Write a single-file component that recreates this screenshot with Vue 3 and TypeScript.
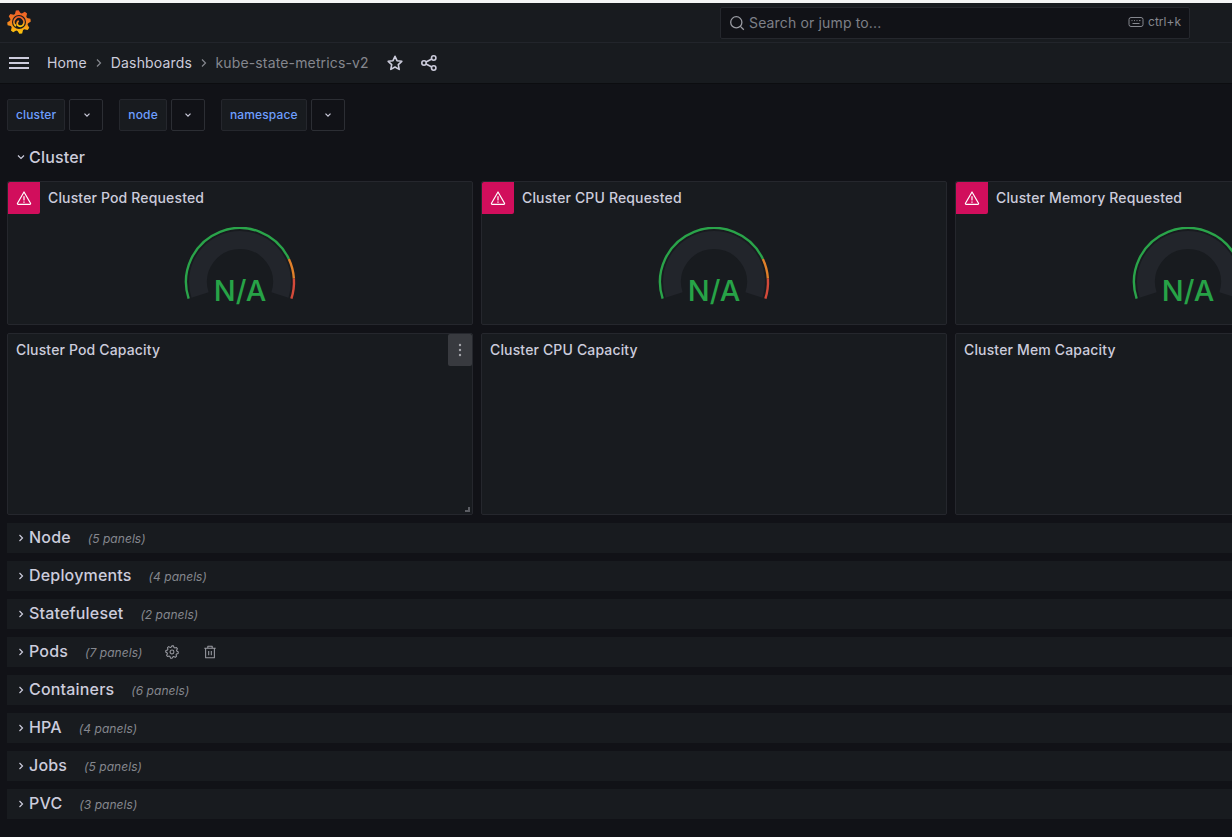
<script setup lang="ts">
interface Row { name: string; count: number; tools?: boolean }

const rows: Row[] = [
  { name: 'Node', count: 5 },
  { name: 'Deployments', count: 4 },
  { name: 'Statefuleset', count: 2 },
  { name: 'Pods', count: 7, tools: true },
  { name: 'Containers', count: 6 },
  { name: 'HPA', count: 4 },
  { name: 'Jobs', count: 5 },
  { name: 'PVC', count: 3 },
]
const filters = ['cluster', 'node', 'namespace']
const gauges = ['Cluster Pod Requested', 'Cluster CPU Requested', 'Cluster Memory Requested']
const stats = ['Cluster Pod Capacity', 'Cluster CPU Capacity', 'Cluster Mem Capacity']

const CX = 56
const CY = 55
function pt(r: number, frac: number): [number, number] {
  const a = ((198 - 216 * frac) * Math.PI) / 180
  return [CX + r * Math.cos(a), CY - r * Math.sin(a)]
}
function arc(r: number, from: number, to: number): string {
  const [x1, y1] = pt(r, from)
  const [x2, y2] = pt(r, to)
  const large = (to - from) * 216 > 180 ? 1 : 0
  return `M${x1.toFixed(2)} ${y1.toFixed(2)}A${r} ${r} 0 ${large} 1 ${x2.toFixed(2)} ${y2.toFixed(2)}`
}
const band = arc(42, 0, 1)
const greenArc = arc(54, 0, 0.8)
const orangeArc = arc(54, 0.8, 0.9)
const redArc = arc(54, 0.9, 1)

function gearPath(c: number, inner: number, outer: number, teeth: number, offset: number): string {
  const pts: string[] = []
  const step = (Math.PI * 2) / teeth
  for (let i = 0; i < teeth; i++) {
    const base = i * step + offset
    const seq: [number, number][] = [[0, inner], [0.25, outer], [0.55, outer], [0.8, inner]]
    for (const [f, r] of seq) {
      const a = base + f * step
      pts.push(`${(c + r * Math.cos(a)).toFixed(2)} ${(c + r * Math.sin(a)).toFixed(2)}`)
    }
  }
  return 'M' + pts.join('L') + 'Z'
}
const logoGear = gearPath(12, 9, 11.8, 8, 0.32)
const settingsGear = gearPath(8, 5.6, 7.2, 8, -0.2)
</script>

<template>
  <div class="page">
    <header class="top-bar">
      <svg class="logo" viewBox="0 0 24 24" width="24" height="24" aria-hidden="true">
        <defs>
          <linearGradient id="grafana-grad" x1="0.5" y1="1" x2="0.5" y2="0">
            <stop offset="0" stop-color="#fbca0a" />
            <stop offset="0.45" stop-color="#f5871f" />
            <stop offset="1" stop-color="#ef5a28" />
          </linearGradient>
        </defs>
        <path :d="logoGear" fill="url(#grafana-grad)" />
        <circle cx="12" cy="12" r="7" fill="#181b1f" />
        <path d="M8.400 15.500a5 5 0 1 1 7.300-.2c-1.300 1.200-3.700 1.300-4.800.1a2.800 2.800 0 0 1 .3-4.100" fill="none" stroke="url(#grafana-grad)" stroke-width="1.800" stroke-linecap="round" />
      </svg>
      <div class="search">
        <svg class="search-icon" viewBox="0 0 16 16" width="16" height="16" aria-hidden="true">
          <circle cx="7.300" cy="7.300" r="5.600" />
          <path d="M11.400 11.400l3.400 3.400" />
        </svg>
        <span class="search-text">Search or jump to...</span>
        <span class="shortcut">
          <svg viewBox="0 0 16 12" width="16" height="12" aria-hidden="true">
            <rect x="1" y="1.500" width="14" height="9" rx="2" />
            <path d="M3.500 4.600h1M6 4.600h1M8.500 4.600h1M11 4.600h1.500M4.500 7.500h7" />
          </svg>
          ctrl+k
        </span>
      </div>
    </header>

    <nav class="nav-bar">
      <svg class="menu" viewBox="0 0 20 14" width="20" height="14" aria-hidden="true">
        <path d="M0 2h20M0 7h20M0 12h20" />
      </svg>
      <span class="crumb">Home</span>
      <svg class="sep" viewBox="0 0 8 10" width="8" height="10" aria-hidden="true"><path d="M2 1.500L5.500 5 2 8.500" /></svg>
      <span class="crumb">Dashboards</span>
      <svg class="sep last" viewBox="0 0 8 10" width="8" height="10" aria-hidden="true"><path d="M2 1.500L5.500 5 2 8.500" /></svg>
      <span class="crumb current">kube-state-metrics-v2</span>
      <svg class="nav-icon star" viewBox="0 0 16 16" width="16" height="16" aria-hidden="true">
        <path d="M8 1.300l2 4.400 4.800.6-3.500 3.300.9 4.800L8 12l-4.200 2.400.9-4.800L1.200 6.300 6 5.700z" />
      </svg>
      <svg class="nav-icon share" viewBox="0 0 16 16" width="16" height="16" aria-hidden="true">
        <circle cx="12.700" cy="3" r="2.200" />
        <circle cx="12.700" cy="13" r="2.200" />
        <circle cx="3" cy="8" r="2.200" />
        <path d="M5 7l5.800-3M5 9l5.800 3" />
      </svg>
    </nav>

    <main class="content">
      <div class="filters">
        <div v-for="f in filters" :key="f" class="filter">
          <span class="filter-label">{{ f }}</span>
          <span class="filter-select">
            <svg viewBox="0 0 10 6" width="10" height="6" aria-hidden="true"><path d="M2.500 1.700L5 4.200 7.500 1.700" /></svg>
          </span>
        </div>
      </div>

      <div class="section-head">
        <svg class="row-chevron" viewBox="0 0 8 8" width="8" height="8" aria-hidden="true"><path d="M1 2.500L4 5.500 7 2.500" /></svg>
        <span class="row-title">Cluster</span>
      </div>

      <div class="grid">
        <section v-for="g in gauges" :key="g" class="panel gauge-panel">
          <span class="alert">
            <svg viewBox="0 0 16 16" width="16" height="16" aria-hidden="true">
              <path d="M8 2L1.500 13.200a.8.8 0 0 0 .7 1.200h11.600a.8.8 0 0 0 .7-1.200z" />
              <path d="M8 6.500v3.500M8 11.900v.4" />
            </svg>
          </span>
          <h2 class="panel-title with-alert">{{ g }}</h2>
          <div class="gauge-wrap">
            <svg class="gauge" viewBox="0 0 112 80" width="112" height="80">
              <path :d="band" class="band" />
              <path :d="greenArc" class="th green" />
              <path :d="orangeArc" class="th orange" />
              <path :d="redArc" class="th red" />
              <text x="56" y="74" text-anchor="middle" class="na">N/A</text>
            </svg>
          </div>
        </section>

        <section v-for="(s, i) in stats" :key="s" class="panel stat-panel">
          <h2 class="panel-title">{{ s }}</h2>
          <span v-if="i === 0" class="panel-menu">
            <svg viewBox="0 0 4 14" width="4" height="14" aria-hidden="true">
              <circle cx="2" cy="2" r="1.200" /><circle cx="2" cy="7" r="1.200" /><circle cx="2" cy="12" r="1.200" />
            </svg>
          </span>
          <span v-if="i === 0" class="resize"></span>
        </section>
      </div>

      <div class="rows">
        <div v-for="r in rows" :key="r.name" class="row">
          <svg class="row-chevron" viewBox="0 0 8 8" width="8" height="8" aria-hidden="true"><path d="M2.500 1L5.500 4 2.500 7" /></svg>
          <span class="row-title lifted">{{ r.name }}</span>
          <span class="row-count">({{ r.count }} panels)</span>
          <template v-if="r.tools">
            <svg class="row-tool first" viewBox="0 0 16 16" width="14" height="14" aria-hidden="true">
              <path :d="settingsGear" />
              <circle cx="8" cy="8" r="2.200" />
            </svg>
            <svg class="row-tool" viewBox="0 0 16 16" width="14" height="14" aria-hidden="true">
              <path d="M1.500 3.800h13M5.500 3.800V1.500h5v2.300M3 3.800v10.700h10V3.800M6.500 6.800v4.800M9.500 6.800v4.800" />
            </svg>
          </template>
        </div>
      </div>
    </main>
  </div>
</template>

<style>
html, body {
  margin: 0;
  background: #111217;
  overflow: hidden;
}
</style>

<style scoped>
.page {
  width: 1232px;
  height: 837px;
  overflow: hidden;
  background: #111217;
  border-top: 3px solid #f4f5f5;
  box-sizing: border-box;
  font-family: Inter, "Liberation Sans", sans-serif;
  letter-spacing: 0.15px;
  color: #ccccdc;
}
.top-bar {
  height: 40px;
  box-sizing: border-box;
  display: flex;
  align-items: center;
  justify-content: space-between;
  padding: 0 42px 0 7px;
  background: #181b1f;
  border-bottom: 1px solid #22252b;
}
.logo { display: block; margin-top: -1px; }
.search {
  width: 470px;
  height: 32px;
  box-sizing: border-box;
  display: flex;
  align-items: center;
  padding: 0 8px;
  background: #111217;
  border: 1px solid #25272d;
  border-radius: 2px;
  color: #7e8088;
  font-size: 14px;
}
.search-icon { margin-right: 4px; fill: none; stroke: #9a9ca3; stroke-width: 1.300; }
.search-text { flex: 1; }
.shortcut {
  display: flex;
  align-items: center;
  gap: 4px;
  font-size: 12px;
  letter-spacing: 0;
  color: #85878e;
  margin-top: -2px;
}
.shortcut svg { fill: none; stroke: #85878e; stroke-width: 1; }
.nav-bar {
  height: 40px;
  box-sizing: border-box;
  display: flex;
  align-items: center;
  padding: 0 0 0 9px;
  background: #181b1f;
  font-size: 14px;
  box-shadow: 0 1px 0 #0c0d10;
}
.menu { fill: none; stroke: #ccccdc; stroke-width: 2; margin-right: 18px; }
.crumb { color: #ccccdc; padding-bottom: 1px; }
.crumb.current { color: #85878e; }
.sep { fill: none; stroke: #85878e; stroke-width: 1.200; margin: 0 8px; }
.sep.last { margin-right: 7.500px; }
.nav-icon { fill: none; stroke: #ccccdc; stroke-width: 1.600; stroke-linejoin: round; }
.star { margin-left: 18px; }
.share { margin-left: 18px; }
.content { padding: 16px 0 0 7px; }
.filters { display: flex; gap: 16px; height: 32px; }
.filter { display: flex; gap: 4px; }
.filter-label {
  display: flex;
  align-items: center;
  padding: 0 8px 1px;
  background: #181b1f;
  border: 1px solid #25272d;
  border-radius: 2px;
  color: #6e9fff;
  font-size: 12px;
  font-weight: 500;
}
.filter-select {
  width: 34px;
  box-sizing: border-box;
  display: flex;
  align-items: center;
  justify-content: center;
  padding-left: 1px;
  background: #111217;
  border: 1px solid #2c2e34;
  border-radius: 2px;
}
.filter-select svg { fill: none; stroke: #ccccdc; stroke-width: 1.200; }
.section-head {
  height: 50px;
  display: flex;
  align-items: center;
  padding: 2px 0 0 10px;
  box-sizing: border-box;
}
.row-chevron { fill: none; stroke: #ccccdc; stroke-width: 1.200; margin-right: 4px; flex: none; }
.row-title { font-size: 16px; font-weight: 500; color: #ccccdc; letter-spacing: 0.18px; }
.row-title.lifted { padding-bottom: 2px; }
.grid {
  width: 1414px;
  display: grid;
  grid-template-columns: repeat(3, 466px);
  grid-template-rows: 144px 182px;
  gap: 8px;
}
.panel {
  position: relative;
  box-sizing: border-box;
  background: #181b1f;
  border: 1px solid #25272d;
  border-radius: 2px;
}
.panel-title {
  margin: 0;
  height: 32px;
  box-sizing: border-box;
  display: flex;
  align-items: center;
  padding: 0 0 2px 8px;
  font-size: 14px;
  font-weight: 500;
  color: #ccccdc;
}
.panel-title.with-alert { padding-left: 40px; }
.alert {
  position: absolute;
  left: 0;
  top: 0;
  width: 32px;
  height: 32px;
  display: flex;
  align-items: center;
  justify-content: center;
  background: #d10e5c;
  border-radius: 2px 0 2px 0;
}
.alert svg { fill: none; stroke: #fff; stroke-width: 1.200; stroke-linejoin: round; stroke-linecap: round; }
.gauge-wrap { display: flex; justify-content: center; padding-top: 13px; }
.gauge { display: block; }
.band { fill: none; stroke: #22252b; stroke-width: 18; }
.th { fill: none; stroke-width: 2.400; }
.green { stroke: #2aa44a; }
.orange { stroke: #e0802a; }
.red { stroke: #d44a3a; }
.na {
  fill: #27a347;
  font-family: Inter, "Liberation Sans", sans-serif;
  font-size: 29px;
  font-weight: 500;
  letter-spacing: 0;
}
.panel-menu {
  position: absolute;
  right: 0;
  top: 0;
  width: 24px;
  height: 32px;
  display: flex;
  align-items: center;
  justify-content: center;
  background: #383a3f;
  border-radius: 2px;
}
.panel-menu svg { fill: #a3a4a9; }
.resize {
  position: absolute;
  right: 2px;
  bottom: 2px;
  width: 5px;
  height: 5px;
  border-right: 2px solid #5b5d63;
  border-bottom: 2px solid #5b5d63;
  box-sizing: border-box;
}
.rows {
  width: 1414px;
  display: flex;
  flex-direction: column;
  gap: 8px;
  margin-top: 8px;
}
.row {
  height: 30px;
  box-sizing: border-box;
  display: flex;
  align-items: center;
  padding-left: 10px;
  background: #181b1f;
}
.row-count {
  margin-left: 17px;
  font-size: 12px;
  font-style: italic;
  letter-spacing: 0.05px;
  color: #85878e;
}
.row-tool { fill: none; stroke: #9a9ca3; stroke-width: 1.200; stroke-linejoin: round; margin-left: 24px; }
.row-tool.first { margin-left: 23px; }
</style>
